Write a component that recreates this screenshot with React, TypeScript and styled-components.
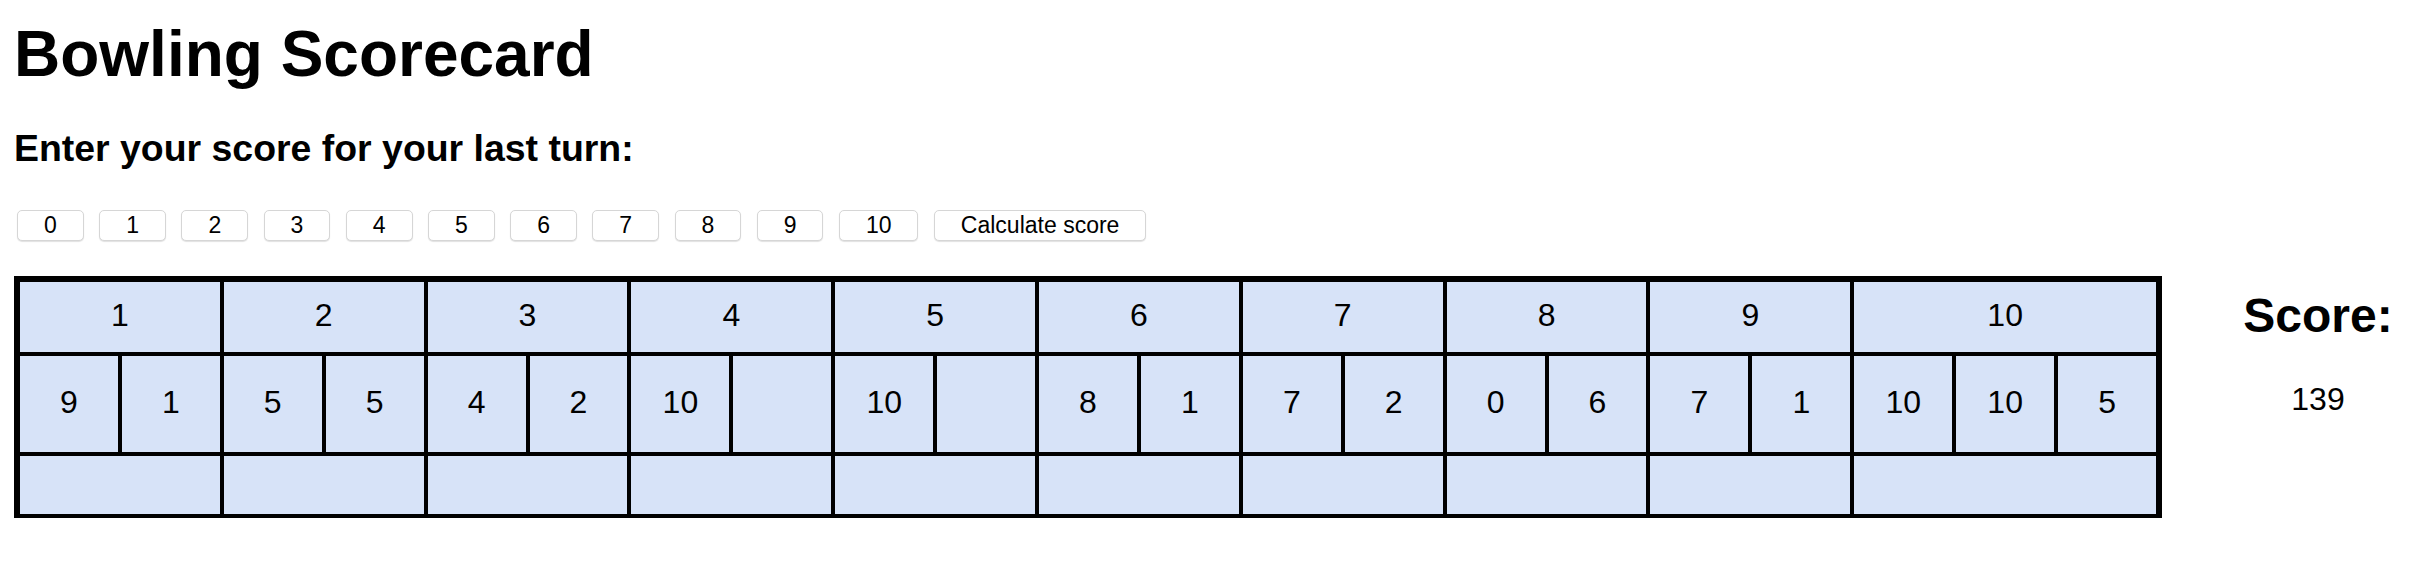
import React from "react";
import styled, { createGlobalStyle } from "styled-components";

const GlobalStyle = createGlobalStyle`
  html, body {
    margin: 0;
    padding: 0;
    background: #ffffff;
  }
  body {
    font-family: "Liberation Sans", Arial, Helvetica, sans-serif;
    color: #000000;
  }
`;

const Page = styled.div`
  display: flex;
  flex-direction: column;
  padding: 17px 8px 0 14px;
`;

const Title = styled.h1`
  margin: 0;
  font-size: 64px;
  line-height: 74px;
  font-weight: 700;
`;

const Prompt = styled.h3`
  margin: 36px 0 0;
  font-size: 37.44px;
  line-height: 43px;
  font-weight: 700;
`;

const ButtonRow = styled.div`
  display: flex;
  gap: 15.4px;
  margin-top: 40px;
  padding-left: 3px;
`;

const PinButton = styled.button`
  height: 31px;
  padding: 0 26px;
  border: 1px solid #d6d6d6;
  border-radius: 5px;
  background: #ffffff;
  box-shadow: 0 1px 1px rgba(0, 0, 0, 0.12);
  font-family: "Liberation Sans", Arial, Helvetica, sans-serif;
  font-size: 23px;
  line-height: 29px;
  color: #000000;
  cursor: pointer;
`;

const MainRow = styled.div`
  display: flex;
  align-items: flex-start;
  margin-top: 35px;
`;

const Card = styled.div`
  display: grid;
  width: 2148px;
  box-sizing: border-box;
  grid-template-columns: repeat(21, 1fr);
  grid-template-rows: 70px 96px 58px;
  gap: 4px;
  padding: 6px 6px 4px;
  background: #000000;
`;

const Cell = styled.div<{ $span?: number }>`
  grid-column: span ${(p) => p.$span ?? 1};
  display: flex;
  align-items: center;
  justify-content: center;
  padding-bottom: 3px;
  background: #d7e3f8;
  font-size: 32px;
`;

const ScoreColumn = styled.div`
  flex: 1;
  margin: 12px 0 0 46px;
  text-align: center;
`;

const ScoreHeading = styled.h2`
  margin: 0;
  font-size: 48px;
  line-height: 56px;
  font-weight: 700;
`;

const ScoreValue = styled.div`
  margin-top: 35px;
  font-size: 32px;
  line-height: 40px;
`;

const rolls: string[][] = [
  ["9", "1"],
  ["5", "5"],
  ["4", "2"],
  ["10", ""],
  ["10", ""],
  ["8", "1"],
  ["7", "2"],
  ["0", "6"],
  ["7", "1"],
  ["10", "10", "5"],
];

const pins = ["0", "1", "2", "3", "4", "5", "6", "7", "8", "9", "10"];

export default function App() {
  return (
    <>
      <GlobalStyle />
      <Page>
        <Title>Bowling Scorecard</Title>
        <Prompt>Enter your score for your last turn:</Prompt>
        <ButtonRow>
          {pins.map((p) => (
            <PinButton key={p}>{p}</PinButton>
          ))}
          <PinButton>Calculate score</PinButton>
        </ButtonRow>
        <MainRow>
          <Card>
            {rolls.map((r, i) => (
              <Cell key={`h${i}`} $span={r.length}>
                {i + 1}
              </Cell>
            ))}
            {rolls.map((r, i) =>
              r.map((v, j) => <Cell key={`r${i}-${j}`}>{v}</Cell>)
            )}
            {rolls.map((r, i) => (
              <Cell key={`t${i}`} $span={r.length} />
            ))}
          </Card>
          <ScoreColumn>
            <ScoreHeading>Score:</ScoreHeading>
            <ScoreValue>139</ScoreValue>
          </ScoreColumn>
        </MainRow>
      </Page>
    </>
  );
}
